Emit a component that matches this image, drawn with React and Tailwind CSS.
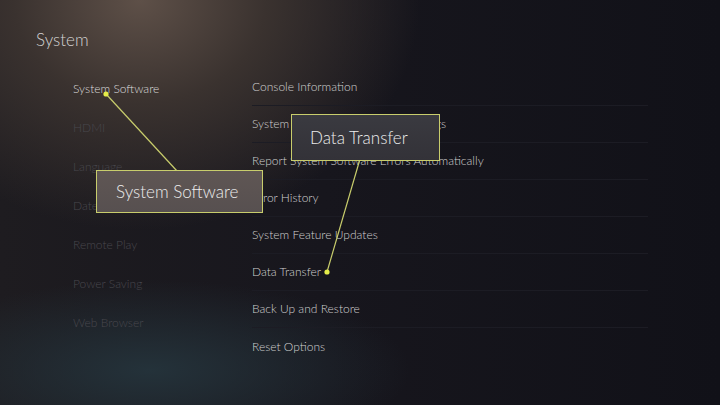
const leftItems = [
  { label: "System Software", active: true },
  { label: "HDMI" },
  { label: "Language" },
  { label: "Date and Time" },
  { label: "Remote Play" },
  { label: "Power Saving" },
  { label: "Web Browser" },
];

const rightItems = [
  "Console Information",
  "System Software Update and Settings",
  "Report System Software Errors Automatically",
  "Error History",
  "System Feature Updates",
  "Data Transfer",
  "Back Up and Restore",
  "Reset Options",
];

function Callout({ className, children }) {
  return (
    <div
      className={`absolute flex items-center border-[1.5px] border-[#c8cd6c] text-[17px] font-light text-[#ececec] ${className}`}
    >
      {children}
    </div>
  );
}

export default function App() {
  return (
    <div
      className="relative h-[405px] w-[720px] overflow-hidden bg-[#14141b] bg-[radial-gradient(ellipse_280px_230px_at_140px_0px,#5e5048_0%,#3a322f_45%,transparent_100%),radial-gradient(ellipse_260px_90px_at_150px_370px,#24323a_0%,transparent_100%),linear-gradient(90deg,#1e1c20_0%,#17161d_45%,#111118_100%)]"
      style={{ fontFamily: '"Lato", "Open Sans", sans-serif' }}
    >
      <div className="pl-[36px] pt-[28px] text-[17px] font-light leading-6 text-[#d2d2d2]">System</div>

      <div className="mt-[17px] flex">
        <div className="ml-[73px] flex w-[179px] flex-col">
          {leftItems.map((item) => (
            <div
              key={item.label}
              className={`flex h-[39px] items-center text-[12px] font-light ${
                item.active ? "text-[#dcdcdc]" : "text-[#48474d]"
              }`}
            >
              {item.label}
            </div>
          ))}
        </div>

        <div className="flex w-[396px] flex-col">
          {rightItems.map((label, i) => (
            <div
              key={label}
              className={`flex h-[37px] items-center text-[12px] font-light text-[#d0d0d0] ${
                i < rightItems.length - 1 ? "border-b border-[#1c1c24]" : ""
              }`}
            >
              {label}
            </div>
          ))}
        </div>
      </div>

      <svg className="absolute inset-0" width="720" height="405">
        <line x1="106" y1="94" x2="177" y2="171" stroke="#c8cd6c" strokeWidth="1.2" />
        <line x1="360" y1="159" x2="327" y2="272" stroke="#c8cd6c" strokeWidth="1.2" />
        <circle cx="106" cy="94" r="2.6" fill="#e4ec4a" />
        <circle cx="327" cy="272" r="2.6" fill="#e4ec4a" />
      </svg>

      <Callout className="left-[291px] top-[114px] h-[47px] w-[149px] bg-[linear-gradient(180deg,#3a3a40,#333238)] pl-[18px]">
        Data Transfer
      </Callout>
      <Callout className="left-[96px] top-[170px] h-[43px] w-[167px] bg-[linear-gradient(180deg,#5f5654,#575050)] pl-[19px]">
        System Software
      </Callout>
    </div>
  );
}
